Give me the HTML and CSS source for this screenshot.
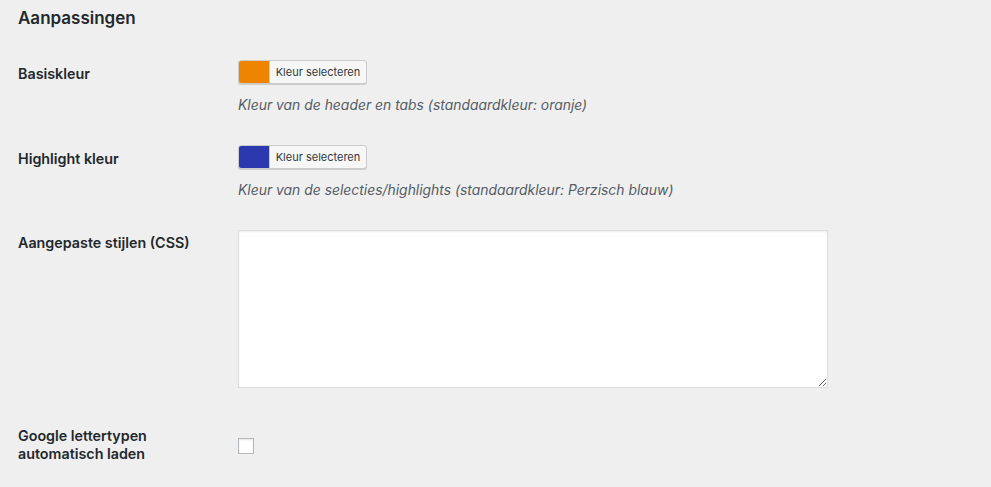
FILE: index.html
```html
<!DOCTYPE html>
<html lang="nl">
<head>
<meta charset="utf-8">
<title>Aanpassingen</title>
<link rel="stylesheet" href="styles.css">
</head>
<body>
<div class="page">
  <h2 class="title">Aanpassingen</h2>

  <div class="row row-color">
    <div class="label">Basiskleur</div>
    <div class="field">
      <button class="color-btn" type="button"><span class="swatch swatch-orange"></span><span class="btn-text">Kleur selecteren</span></button>
      <p class="desc">Kleur van de header en tabs (standaardkleur: oranje)</p>
    </div>
  </div>

  <div class="row row-color">
    <div class="label">Highlight kleur</div>
    <div class="field">
      <button class="color-btn" type="button"><span class="swatch swatch-blue"></span><span class="btn-text">Kleur selecteren</span></button>
      <p class="desc">Kleur van de selecties/highlights (standaardkleur: Perzisch blauw)</p>
    </div>
  </div>

  <div class="row row-css">
    <div class="label">Aangepaste stijlen (CSS)</div>
    <div class="field">
      <textarea class="css-area"></textarea>
    </div>
  </div>

  <div class="row row-check">
    <div class="label">Google lettertypen<br>automatisch laden</div>
    <div class="field">
      <span class="checkbox"></span>
    </div>
  </div>
</div>
</body>
</html>
```

FILE: styles.css
```css
* { box-sizing: border-box; }
html, body { margin: 0; padding: 0; }
body {
  background: #efefef;
  font-family: Inter, "Noto Sans", "Liberation Sans", sans-serif;
  color: #23282d;
  width: 991px;
  height: 487px;
  overflow: hidden;
}
.page {
  padding: 7px 18px 0;
}
.title {
  margin: 0;
  font-size: 17px;
  font-weight: 600;
  line-height: 23px;
  color: #23282d;
}
.row {
  display: grid;
  grid-template-columns: 220px 1fr;
  align-items: start;
}
.label {
  font-size: 14.3px;
  font-weight: 600;
  line-height: 18px;
}
.row-color { margin-top: 30px; }
.row-color + .row-color { margin-top: 30px; }
.row-color .label { padding-top: 5px; }
.color-btn {
  display: flex;
  align-items: stretch;
  height: 24px;
  width: 129px;
  padding: 0;
  border: 1px solid #cccccc;
  border-radius: 3px;
  background: #f7f7f7;
  overflow: hidden;
  font-family: inherit;
  cursor: pointer;
  box-shadow: 0 1px 0 #cccccc;
}
.swatch {
  width: 31px;
  flex: none;
  border-right: 1px solid #cccccc;
}
.swatch-orange { background: #ee8400; }
.swatch-blue { background: #2c38ad; }
.btn-text {
  flex: 1;
  display: flex;
  align-items: center;
  justify-content: center;
  font-size: 11px;
  color: #32373c;
  padding-bottom: 1px;
}
.desc {
  margin: 11px 0 0;
  font-size: 13.9px;
  line-height: 20px;
  font-style: italic;
  color: #555d66;
}
.row-css { margin-top: 30px; }
.row-css .label { padding-top: 4px; }
.css-area {
  display: block;
  width: 590px;
  height: 158px;
  margin: 0;
  border: 1px solid #dddddd;
  box-shadow: inset 0 1px 2px rgba(0,0,0,0.07);
  background: #ffffff;
  resize: both;
  font-family: inherit;
}
.row-check { margin-top: 39px; }
.row-check .label { line-height: 17.5px; }
.checkbox {
  display: block;
  width: 16px;
  height: 16px;
  margin-top: 11px;
  border: 1px solid #b4b9be;
  background: #ffffff;
  box-shadow: inset 0 1px 2px rgba(0,0,0,0.1);
}
```
